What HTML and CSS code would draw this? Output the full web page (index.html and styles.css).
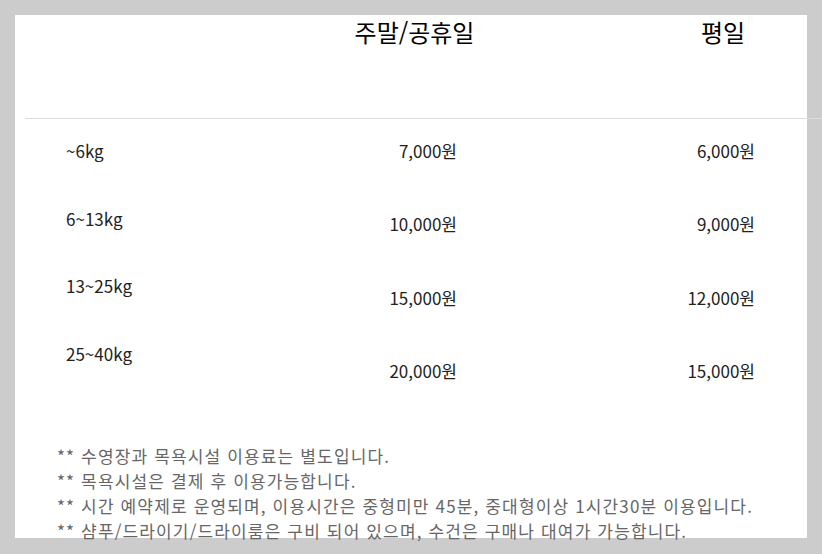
FILE: index.html
```html
<!DOCTYPE html>
<html lang="ko">
<head>
    <meta charset="UTF-8">
    <title>이용요금</title>
    <link rel="stylesheet" href="styles.css">
</head>
<body>

<div class="panel">
    <div class="price_head">
        <div class="head_blank"></div>
        <div class="head_col head_weekend">주말/공휴일</div>
        <div class="head_col head_weekday">평일</div>
    </div>
    <div class="head_line"></div>

    <div class="rates">
        <ul class="weights">
            <li>~6kg</li>
            <li>6~13kg</li>
            <li>13~25kg</li>
            <li>25~40kg</li>
        </ul>
        <ul class="prices weekend">
            <li>7,000원</li>
            <li>10,000원</li>
            <li>15,000원</li>
            <li>20,000원</li>
        </ul>
        <ul class="prices weekday">
            <li>6,000원</li>
            <li>9,000원</li>
            <li>12,000원</li>
            <li>15,000원</li>
        </ul>
    </div>

    <div class="notes">
        <p>** 수영장과 목욕시설 이용료는 별도입니다.</p>
        <p>** 목욕시설은 결제 후 이용가능합니다.</p>
        <p>** 시간 예약제로 운영되며, 이용시간은 중형미만 45분, 중대형이상 1시간30분 이용입니다.</p>
        <p>** 샴푸/드라이기/드라이룸은 구비 되어 있으며, 수건은 구매나 대여가 가능합니다.</p>
    </div>
</div>

</body>
</html>
```

FILE: styles.css
```css
html, body {
    margin: 0;
    height: 554px;
    overflow: hidden;
}

body {
    background-color: #cccccc;
    padding: 15px 15px 0 15px;
    box-sizing: border-box;
    font-family: "Noto Sans CJK KR", "Noto Sans", sans-serif;
}

.panel {
    width: 792px;
    height: 523px;
    background-color: #ffffff;
}

.price_head {
    display: flex;
    height: 103px;
    font-size: 24px;
    color: #000;
}

.head_blank {
    width: 291px;
    flex-shrink: 0;
}

.head_col {
    text-align: center;
    line-height: 34px;
    flex-shrink: 0;
}

.head_weekend {
    width: 217px;
}

.head_weekday {
    width: 150px;
    margin-left: 125px;
}

.head_line {
    height: 1px;
    background-color: #dddddd;
    margin-left: 10px;
    margin-right: -15px;
}

.rates {
    display: flex;
    padding-left: 51px;
    padding-top: 20px;
    font-size: 17px;
    color: #222;
}

.rates ul {
    list-style: none;
    margin: 0;
    padding: 0;
}

.rates li {
    line-height: 24px;
}

.weights {
    width: 200px;
}

.weights li {
    margin-bottom: 43.6px;
}

.prices {
    text-align: right;
}

.prices li {
    margin-bottom: 49.3px;
}

.weekend {
    width: 191px;
}

.weekday {
    width: 298px;
}

.notes {
    padding-left: 42px;
    margin-top: 11px;
    color: #666;
    font-size: 17px;
    letter-spacing: 1.15px;
}

.notes p {
    margin: 0;
    line-height: 25px;
}
```
